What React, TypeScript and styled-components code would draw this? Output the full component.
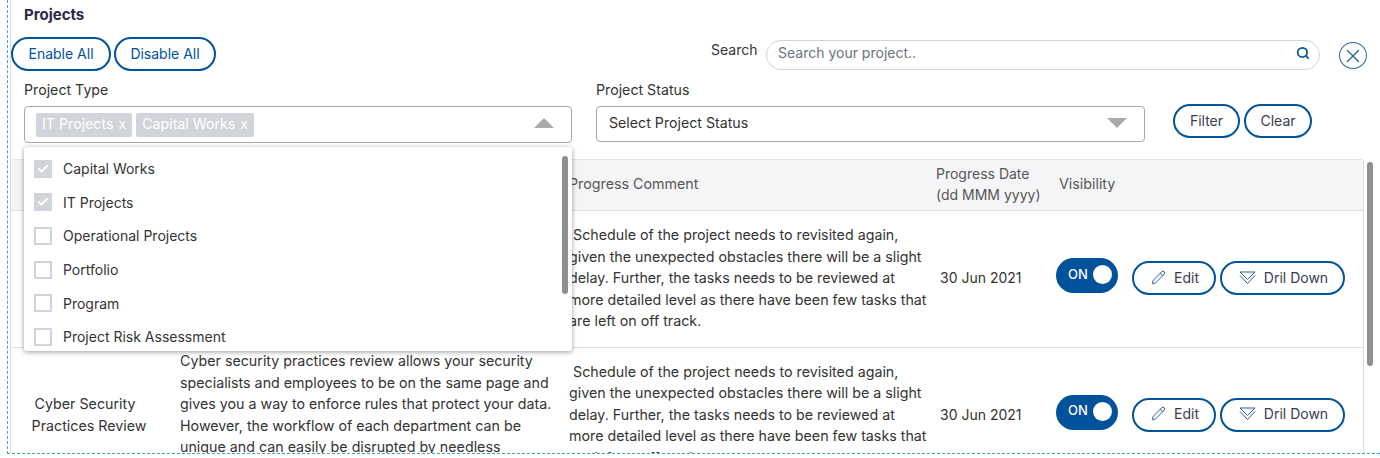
import React from "react";
import styled, { createGlobalStyle } from "styled-components";
import { Check, Pencil, Search, X } from "lucide-react";

const blue = "#00529b";
const font = `Inter, "Liberation Sans", sans-serif`;

const GlobalStyle = createGlobalStyle`
  html, body {
    margin: 0;
    height: 458px;
    overflow: hidden;
    background: #fff;
    font-family: ${font};
    font-size: 14px;
    color: #333;
  }
`;

const Frame = styled.div`
  box-sizing: border-box;
  height: 454px;
  margin-left: 7px;
  border-left: 1px dashed #4a9be0;
  border-bottom: 1px dashed #4a9be0;
  overflow: hidden;
`;

const Panel = styled.div`
  box-sizing: border-box;
  height: 100%;
  margin-left: 2px;
  border-left: 1px solid #ddd;
`;

const Title = styled.div`
  height: 30px;
  padding: 6px 0 0 13px;
  box-sizing: border-box;
  font-size: 15px;
  font-weight: 700;
  line-height: 18px;
  color: #2b2848;
`;

const PillButton = styled.button<{ $w: number }>`
  box-sizing: border-box;
  width: ${(p) => p.$w}px;
  height: 34px;
  padding: 0;
  display: inline-flex;
  align-items: center;
  justify-content: center;
  gap: 10px;
  background: #fff;
  border: 2px solid ${blue};
  border-radius: 17px;
  font-family: ${font};
  font-size: 14px;
  color: ${blue};
`;

const TopButton = styled(PillButton)`
  padding: 0 0 2px 0;
`;

const ActionButton = styled(PillButton)`
  padding: 0 0 2px 0;
  color: #3a3a55;
`;

const RowButton = styled(ActionButton)`
  padding: 0 0 2px 2px;
  gap: 8px;
`;

const TopRow = styled.div`
  display: flex;
  align-items: flex-start;
  height: 37px;
  padding-top: 7px;
`;

const TopLeft = styled.div`
  display: flex;
  gap: 3px;
`;

const SearchLabel = styled.span`
  margin-left: 495px;
  width: 55px;
  line-height: 26px;
  color: #333;
`;

const SearchBox = styled.div`
  box-sizing: border-box;
  width: 554px;
  height: 30px;
  margin-top: 3px;
  padding: 0 9px 5px 11px;
  display: flex;
  align-items: center;
  justify-content: space-between;
  border: 1px solid #cdd5df;
  border-radius: 15px;
  color: #6b7280;
`;

const CloseCircle = styled.div`
  box-sizing: border-box;
  width: 28px;
  height: 27px;
  margin: 5px 0 0 19px;
  display: flex;
  align-items: center;
  justify-content: center;
  border: 1.5px solid #2c6aa3;
  border-radius: 50%;
  color: #2c6aa3;
`;

const FilterRow = styled.div`
  display: flex;
  align-items: flex-start;
  padding-left: 13px;
  height: 85px;
`;

const Field = styled.div<{ $w: number }>`
  position: relative;
  width: ${(p) => p.$w}px;
  margin-right: 24px;
  padding-top: 6px;
`;

const FieldLabel = styled.div`
  height: 26px;
  line-height: 20px;
  font-size: 14.2px;
  color: #333;
`;

const SelectBox = styled.div<{ $h: number }>`
  box-sizing: border-box;
  height: ${(p) => p.$h}px;
  padding: 0 17px 3px 12px;
  display: flex;
  align-items: center;
  justify-content: space-between;
  background: #fff;
  border: 1px solid #a8a8a8;
  border-radius: 4px;
  font-size: 14.2px;
  color: #333;
`;

const Tags = styled.div`
  display: flex;
  gap: 4px;
  margin: 4px 0 0 -1px;
`;

const Tag = styled.span`
  height: 24px;
  padding: 0 6px;
  line-height: 22px;
  font-size: 14.2px;
  background: #d0d4db;
  border-radius: 2px;
  color: #fff;
  white-space: nowrap;
`;

const TagClose = styled.span`
  margin-left: 5px;
`;

const Arrow = styled.span<{ $up?: boolean }>`
  width: 0;
  height: 0;
  border-left: 10px solid transparent;
  border-right: 10px solid transparent;
  ${(p) => (p.$up ? "border-bottom" : "border-top")}: 10px solid #a9a9a9;
`;

const FilterActions = styled.div`
  display: flex;
  gap: 4px;
  padding: 30px 0 0 4px;
`;

const Dropdown = styled.div`
  position: absolute;
  z-index: 5;
  top: 73px;
  left: 0;
  width: 548px;
  height: 204px;
  overflow: hidden;
  box-sizing: border-box;
  padding-top: 5px;
  background: #fff;
  border-radius: 3px;
  box-shadow: 0 1px 5px rgba(0, 0, 0, 0.4);
`;

const DropScroll = styled.div`
  position: absolute;
  top: 9px;
  right: 4px;
  width: 6px;
  height: 138px;
  background: #8f8f8f;
  border-radius: 3px;
`;

const Option = styled.div`
  display: flex;
  align-items: center;
  gap: 11px;
  height: 33.6px;
  padding-left: 10px;
`;

const CheckMark = styled.span<{ $on: boolean }>`
  box-sizing: border-box;
  width: 18px;
  height: 18px;
  display: flex;
  align-items: center;
  justify-content: center;
  background: ${(p) => (p.$on ? "#d0d4db" : "#fff")};
  border: 2px solid #d0d4db;
  color: #fff;
`;

const TableArea = styled.div`
  display: flex;
`;

const Table = styled.div`
  box-sizing: border-box;
  width: 1353px;
  height: 300px;
  border-top: 1px solid #e4e4e4;
  border-right: 1px solid #ddd;
  border-radius: 4px 4px 0 0;
`;

const TableScroll = styled.div`
  width: 6px;
  height: 204px;
  margin: 3px 0 0 3px;
  background: #8f8f8f;
  border-radius: 3px;
`;

const Row = styled.div<{ $pad: number }>`
  box-sizing: border-box;
  display: grid;
  grid-template-columns: 159px 389px 373px 123px 1fr;
  align-items: center;
  height: 137px;
  padding-bottom: ${(p) => p.$pad}px;
  background: #fff;
  border-bottom: 1px solid #e2e2e2;
  color: #333;
  font-size: 14.25px;
  line-height: 21.5px;
`;

const HeadRow = styled(Row)`
  height: 51px;
  background: #f5f5f8;
  color: #555;
`;

const NameCell = styled.div`
  text-align: center;
  padding: 0 15px 0 12px;
`;

const TextCell = styled.div`
  padding-left: 10px;
  padding-right: 2px;
`;

const DateCell = styled.div<{ $head?: boolean }>`
  padding-left: ${(p) => (p.$head ? "4px" : "8px")};
  font-size: 14px;
`;

const VisibilityHead = styled.div`
  padding-left: 4px;
`;

const ActionCell = styled.div`
  display: flex;
  align-items: center;
  padding-left: 1px;
`;

const Toggle = styled.div`
  box-sizing: border-box;
  width: 62px;
  height: 35px;
  margin: 0 14px 5px 0;
  padding: 0 6px 2px 12px;
  display: flex;
  align-items: center;
  justify-content: space-between;
  background: ${blue};
  border-radius: 18px;
  color: #fff;
  font-size: 13px;
  font-weight: 500;
`;

const Knob = styled.span`
  width: 19px;
  height: 19px;
  border-radius: 50%;
  background: #fff;
`;

const Actions = styled.div`
  display: flex;
  gap: 4px;
`;

const DrillIcon = () => (
  <svg width="17" height="13" viewBox="0 0 17 13" fill="none" stroke="#2c5f94" strokeWidth="1">
    <path d="M1 1h15L8.5 8.5z" />
    <path d="M1 4.5l7.5 8 7.5-8" />
  </svg>
);

const projectTypes = [
  { label: "Capital Works", on: true },
  { label: "IT Projects", on: true },
  { label: "Operational Projects", on: false },
  { label: "Portfolio", on: false },
  { label: "Program", on: false },
  { label: "Project Risk Assessment", on: false },
];

const comment =
  "\u00a0Schedule of the project needs to revisited again, given the unexpected obstacles there will be a slight delay. Further, the tasks needs to be reviewed at more detailed level as there have been few tasks that are left on off track.";

const description =
  "Cyber security practices review allows your security specialists and employees to be on the same page and gives you a way to enforce rules that protect your data. However, the workflow of each department can be unique and can easily be disrupted by needless approvals and manual steps.";

const DataRow = ({ covered }: { covered?: boolean }) => (
  <Row $pad={covered ? 2 : 3}>
    {/* the first row's left cells sit under the open dropdown */}
    <NameCell>{!covered && "Cyber Security\u00a0\u00a0 Practices Review"}</NameCell>
    <TextCell>{!covered && description}</TextCell>
    <TextCell>{comment}</TextCell>
    <DateCell>30 Jun 2021</DateCell>
    <ActionCell>
      <Toggle>
        ON
        <Knob />
      </Toggle>
      <Actions>
        <RowButton $w={84}>
          <Pencil size={15} strokeWidth={1.6} color="#2c5f94" />
          Edit
        </RowButton>
        <RowButton $w={125}>
          <DrillIcon />
          Dril Down
        </RowButton>
      </Actions>
    </ActionCell>
  </Row>
);

export default function App() {
  return (
    <>
      <GlobalStyle />
      <Frame>
        <Panel>
          <Title>Projects</Title>
          <TopRow>
            <TopLeft>
              <TopButton $w={100}>Enable All</TopButton>
              <TopButton $w={102}>Disable All</TopButton>
            </TopLeft>
            <SearchLabel>Search</SearchLabel>
            <SearchBox>
              Search your project..
              <Search size={14} strokeWidth={3} color={blue} />
            </SearchBox>
            <CloseCircle>
              <X size={22} strokeWidth={1.5} />
            </CloseCircle>
          </TopRow>
          <FilterRow>
            <Field $w={548}>
              <FieldLabel>Project Type</FieldLabel>
              <SelectBox $h={37}>
                <Tags>
                  <Tag>
                    IT Projects<TagClose>x</TagClose>
                  </Tag>
                  <Tag>
                    Capital Works<TagClose>x</TagClose>
                  </Tag>
                </Tags>
                <Arrow $up />
              </SelectBox>
              <Dropdown>
                {projectTypes.map((t) => (
                  <Option key={t.label}>
                    <CheckMark $on={t.on}>{t.on && <Check size={12} strokeWidth={4} />}</CheckMark>
                    {t.label}
                  </Option>
                ))}
                <DropScroll />
              </Dropdown>
            </Field>
            <Field $w={549}>
              <FieldLabel>Project Status</FieldLabel>
              <SelectBox $h={36}>
                Select Project Status
                <Arrow />
              </SelectBox>
            </Field>
            <FilterActions>
              <ActionButton $w={67}>Filter</ActionButton>
              <ActionButton $w={68}>Clear</ActionButton>
            </FilterActions>
          </FilterRow>
          <TableArea>
            <Table>
              <HeadRow $pad={2}>
                <div />
                <div />
                <TextCell>Progress Comment</TextCell>
                <DateCell $head>
                  Progress Date
                  <br />
                  (dd MMM yyyy)
                </DateCell>
                <VisibilityHead>Visibility</VisibilityHead>
              </HeadRow>
              <DataRow covered />
              <DataRow />
            </Table>
            <TableScroll />
          </TableArea>
        </Panel>
      </Frame>
    </>
  );
}
